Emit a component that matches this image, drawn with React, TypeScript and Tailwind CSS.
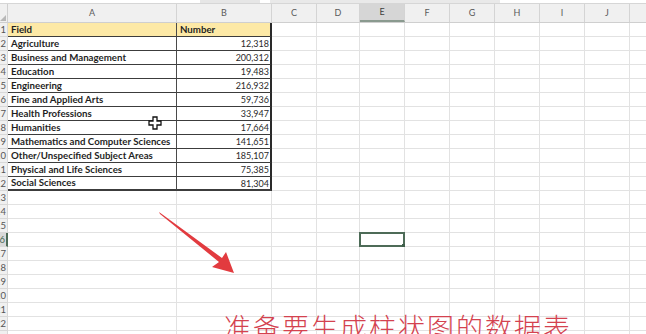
import React from 'react'

const cols = [
    { k: 'A', w: 169 },
    { k: 'B', w: 95 },
    { k: 'C', w: 45 },
    { k: 'D', w: 43 },
    { k: 'E', w: 45 },
    { k: 'F', w: 45 },
    { k: 'G', w: 45 },
    { k: 'H', w: 45 },
    { k: 'I', w: 45 },
    { k: 'J', w: 45 },
    { k: '', w: 30 },
]

const data: [string, string][] = [
    ['Agriculture', '12,318'],
    ['Business and Management', '200,312'],
    ['Education', '19,483'],
    ['Engineering', '216,932'],
    ['Fine and Applied Arts', '59,736'],
    ['Health Professions', '33,947'],
    ['Humanities', '17,664'],
    ['Mathematics and Computer Sciences', '141,651'],
    ['Other/Unspecified Subject Areas', '185,107'],
    ['Physical and Life Sciences', '75,385'],
    ['Social Sciences', '81,304'],
]

const font = { fontFamily: 'Lato, "Liberation Sans", sans-serif' }

function Cell({ row, col, w }: { row: number; col: number; w: number }) {
    const inTable = row <= 12 && col <= 1
    const header = row === 1 && col <= 1
    const last = row === 12
    let text = ''
    if (row === 1 && col === 0) text = 'Field'
    if (row === 1 && col === 1) text = 'Number'
    if (row > 1 && row <= 12) text = col === 0 ? data[row - 2][0] : col === 1 ? data[row - 2][1] : ''

    const border = inTable
        ? `${last ? 'border-b-2' : 'border-b'} border-b-[#3c3c3c] ${col === 1 ? 'border-r-2 border-r-[#2a2a2a]' : 'border-r border-r-[#4a4a4a]'}`
        : 'border-b border-r border-[#e2e2e2]'

    const align = col === 1 && row > 1 ? 'justify-end pr-[1px]' : 'justify-start pl-[3px]'
    const weight = col === 0 || row === 1 ? 'font-bold text-[9.7px] text-[#1f1f1f]' : 'text-[9px] text-[#2a2a2a]'

    return (
        <div
            className={`relative flex items-center shrink-0 h-full overflow-visible whitespace-nowrap ${border} ${align} ${header ? 'bg-[#fde9a6]' : 'bg-white'}`}
            style={{ width: w }}
        >
            <span className={`${weight} leading-none`}>{text}</span>
            {row === 16 && col === 4 && (
                <div className="absolute -left-[1px] -top-[1px] w-[46px] h-[15px] border-2 border-[#4d6b57]">
                    <div className="absolute -right-[3px] -bottom-[3px] w-[4px] h-[4px] bg-[#3f5f4b]" />
                </div>
            )}
        </div>
    )
}

export default function App() {
    const rows = Array.from({ length: 23 }, (_, i) => i + 1)
    return (
        <div className="relative w-[646px] h-[334px] overflow-hidden bg-white select-none" style={font}>
            <div className="h-[4px] bg-white border-b border-[#d6d6d6] flex">
                <div className="w-[200px]" />
                <div className="w-[60px] bg-[#e6e6e6]" />
                <div className="w-[10px]" />
                <div className="w-[230px] bg-[#e9e9e9]" />
            </div>
            <div className="flex h-[19px] bg-[#f0f0f0] border-b border-[#cfcfcf]">
                <div className="w-[8px] shrink-0 border-r border-[#cfcfcf] relative">
                    <div className="absolute right-[1px] bottom-[1px] w-0 h-0 border-l-[6px] border-l-transparent border-b-[6px] border-b-[#b8b8b8]" />
                </div>
                {cols.map((c) => (
                    <div
                        key={c.k + c.w}
                        className={`shrink-0 flex items-center justify-center text-[9px] border-r border-[#d4d4d4] ${c.k === 'E' ? 'bg-[#d6d6d6] text-[#3f3f3f] border-b-2 border-b-[#8a9a8f]' : 'text-[#5a5a5a]'}`}
                        style={{ width: c.w }}
                    >
                        {c.k}
                    </div>
                ))}
            </div>
            {rows.map((r) => (
                <div key={r} className="flex h-[14px]">
                    <div
                        className={`w-[8px] shrink-0 overflow-hidden flex items-center justify-end pr-[1px] text-[9.5px] border-b border-r border-[#d8d8d8] ${r === 16 ? 'bg-[#d9d9d9] text-[#4d6b57] border-r-2 border-r-[#4d6b57]' : 'bg-[#f0f0f0] text-[#555]'}`}
                    >
                        <span className="leading-none">{r}</span>
                    </div>
                    {cols.map((c, ci) => (
                        <Cell key={ci} row={r} col={ci} w={c.w} />
                    ))}
                </div>
            ))}

            {/* mouse cursor */}
            <svg className="absolute left-[148px] top-[116px]" width="14" height="14" viewBox="0 0 14 14">
                <path d="M5 1h4v4h4v4H9v4H5V9H1V5h4z" fill="white" stroke="#111" strokeWidth="1.3" />
            </svg>

            {/* red arrow */}
            <svg className="absolute left-0 top-0 pointer-events-none" width="646" height="334" viewBox="0 0 646 334">
                <path d="M159 212 L222 258 L226 252 L234 273 L212 267 L219 262 L160 214 Z" fill="#e23b3f" />
            </svg>

            <div
                className="absolute left-[224px] top-[313px] text-[27px] leading-none text-[#d4424f] font-light tracking-[2px] whitespace-nowrap"
                style={{ fontFamily: '"Noto Sans CJK SC", sans-serif' }}
            >
                准备要生成柱状图的数据表
            </div>
        </div>
    )
}
